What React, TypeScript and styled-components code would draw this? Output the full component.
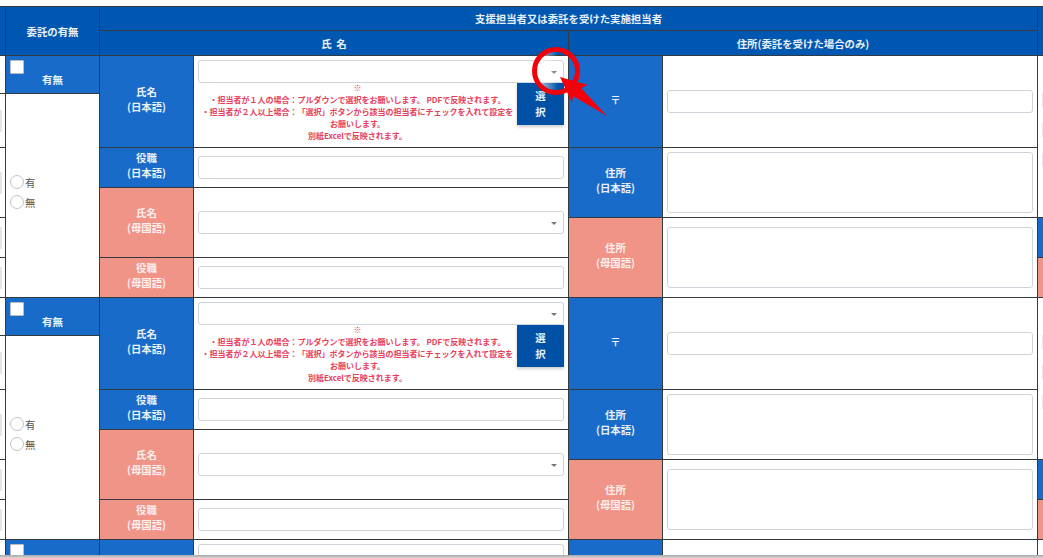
import React from 'react'
import styled, { createGlobalStyle } from 'styled-components'

const headerBlue = '#0057b1'
const labelBlue = '#186bc8'
const salmon = '#f09488'
const line = '#333a40'
const fieldBorder = '#ced4da'

const GlobalStyle = createGlobalStyle`
  html, body {
    margin: 0;
    height: 558px;
    overflow: hidden;
    background: #fff;
  }
  body {
    font-family: "Noto Sans CJK JP", "Noto Sans", sans-serif;
    font-size: 10.4px;
    color: #555;
    text-spacing-trim: space-all;
  }
`

const Page = styled.div`
  position: relative;
  width: 1043px;
  height: 558px;
  padding-top: 6px;
  box-sizing: border-box;
  overflow: hidden;
`

const Table = styled.table`
  table-layout: fixed;
  width: 1048px;
  border-collapse: separate;
  border-spacing: 0;

  td,
  th {
    padding: 0;
    border-right: 1px solid ${line};
    border-bottom: 1px solid ${line};
    box-sizing: border-box;
  }
`

const Row = styled.tr<{ $h: number }>`
  height: ${(p) => p.$h}px;
`

const HeadCell = styled.th<{ $top?: boolean }>`
  background: ${headerBlue};
  color: #e9f0f8;
  font-size: 10.4px;
  font-weight: 700;
  text-align: center;
  vertical-align: middle;
  ${(p) => p.$top && `border-top: 1px solid ${line};`}
`

const Label = styled.td<{ $tone: 'blue' | 'salmon' }>`
  background: ${(p) => (p.$tone === 'blue' ? labelBlue : salmon)};
  color: ${(p) => (p.$tone === 'blue' ? '#e9f0f8' : '#fbeeec')};
  font-weight: 700;
  line-height: 15px;
  text-align: center;
  vertical-align: middle;
  padding-bottom: 5px !important;
`

const FieldCell = styled.td`
  padding: 0 4px !important;
  vertical-align: middle;
`

const NameCell = styled.td`
  padding: 4px 4px 0 !important;
  vertical-align: top;
`

const CheckCell = styled.td`
  position: relative;
  background: ${labelBlue};
  color: #e9f0f8;
  font-weight: 700;
  vertical-align: top;
`

const CheckBox = styled.span`
  display: block;
  width: 14px;
  height: 14px;
  margin: 4px 0 0 4px;
  background: #fff;
  border: 1px solid #b8bec4;
  border-radius: 1px;
  box-sizing: border-box;
`

const CheckLabel = styled.div`
  margin-top: -2px;
  line-height: 15px;
  text-align: center;
`

const RadioCell = styled.td`
  padding: 0 0 7px 4px !important;
  vertical-align: middle;
`

const RadioRow = styled.label`
  display: flex;
  align-items: center;
  gap: 1px;
  height: 20px;
  color: #555;
`

const RadioDot = styled.span`
  width: 14px;
  height: 14px;
  border: 1px solid #bfc5cb;
  border-radius: 50%;
  box-sizing: border-box;
  background: #fff;
`

const Strip = styled.td<{ $bg?: string }>`
  background: ${(p) => p.$bg ?? '#fff'};
  vertical-align: middle;
`

const StripStub = styled.div`
  width: 2px;
  height: 22px;
  background: #e3e6ea;
`

const RightStrip = styled.td<{ $bg?: string }>`
  background: ${(p) => p.$bg ?? '#fff'};
  border-bottom: 0;
  padding: 37px 0 0 4px !important;
  vertical-align: top;
`

const RightStub = styled.div`
  width: 2px;
  height: 14px;
  margin-bottom: 16px;
  background: #e3e6ea;
`

const TextInput = styled.input`
  display: block;
  width: 100%;
  height: 23px;
  padding: 0 6px;
  background: #fff;
  border: 1px solid ${fieldBorder};
  border-radius: 3px;
  box-sizing: border-box;
`

const TextArea = styled.textarea`
  display: block;
  width: 100%;
  height: 61px;
  padding: 4px 6px;
  background: #fff;
  border: 1px solid ${fieldBorder};
  border-radius: 3px;
  box-sizing: border-box;
  resize: none;
`

const SelectBox = styled.div`
  position: relative;
  height: 23px;
  background: #fff;
  border: 1px solid ${fieldBorder};
  border-radius: 3px;
  box-sizing: border-box;

  &::after {
    content: '';
    position: absolute;
    top: 10px;
    right: 6px;
    border-top: 3px solid #777;
    border-left: 3px solid transparent;
    border-right: 3px solid transparent;
  }
`

const NoteRow = styled.div`
  display: flex;
  align-items: flex-start;
`

const Note = styled.div`
  flex: 1;
  margin-top: -1px;
  padding: 0 3px;
  color: #e8405a;
  font-size: 8px;
  font-weight: 700;
  line-height: 12px;
  text-align: center;
`

const PickButton = styled.button`
  flex: none;
  width: 47px;
  height: 42px;
  padding: 0 16px;
  background: #0050a6;
  border: 0;
  box-shadow: 0 2px 3px rgba(0, 0, 0, 0.2);
  color: #e9f0f8;
  font-family: inherit;
  font-size: 10.4px;
  font-weight: 700;
  line-height: 16px;
`

const BottomEdge = styled.div`
  position: absolute;
  left: 0;
  right: 0;
  bottom: 0;
  height: 3px;
  background: linear-gradient(#a9a9a9, #d4d4d4);
`

const Annotation = styled.svg`
  position: absolute;
  left: 520px;
  top: 40px;
  width: 100px;
  height: 90px;
`

const Section = () => (
  <>
    <Row $h={38}>
      <Strip />
      <CheckCell>
        <CheckBox />
        <CheckLabel>有無</CheckLabel>
      </CheckCell>
      <Label $tone="blue" rowSpan={2}>
        氏名
        <br />
        (日本語)
      </Label>
      <NameCell rowSpan={2}>
        <SelectBox />
        <NoteRow>
          <Note>
            ※
            <br />
            ・担当者が１人の場合：プルダウンで選択をお願いします。 PDFで反映されます。
            <br />
            ・担当者が２人以上場合：「選択」ボタンから該当の担当者にチェックを入れて設定をお願いします。
            <br />
            別紙Excelで反映されます。
          </Note>
          <PickButton type="button">選択</PickButton>
        </NoteRow>
      </NameCell>
      <Label $tone="blue" rowSpan={2}>
        〒
      </Label>
      <FieldCell rowSpan={2}>
        <TextInput />
      </FieldCell>
      <RightStrip rowSpan={4}>
        <RightStub />
        <RightStub />
        <RightStub />
      </RightStrip>
    </Row>
    <Row $h={54}>
      <Strip>
        <StripStub />
      </Strip>
      <RadioCell rowSpan={5}>
        <RadioRow>
          <RadioDot />有
        </RadioRow>
        <RadioRow>
          <RadioDot />無
        </RadioRow>
      </RadioCell>
    </Row>
    <Row $h={40}>
      <Strip rowSpan={2}>
        <StripStub />
      </Strip>
      <Label $tone="blue">
        役職
        <br />
        (日本語)
      </Label>
      <FieldCell>
        <TextInput />
      </FieldCell>
      <Label $tone="blue" rowSpan={2}>
        住所
        <br />
        (日本語)
      </Label>
      <FieldCell rowSpan={2}>
        <TextArea />
      </FieldCell>
    </Row>
    <Row $h={30}>
      <Label $tone="salmon" rowSpan={2}>
        氏名
        <br />
        (母国語)
      </Label>
      <FieldCell rowSpan={2}>
        <SelectBox />
      </FieldCell>
    </Row>
    <Row $h={40}>
      <Strip>
        <StripStub />
      </Strip>
      <Label $tone="salmon" rowSpan={2}>
        住所
        <br />
        (母国語)
      </Label>
      <FieldCell rowSpan={2}>
        <TextArea />
      </FieldCell>
      <Strip $bg={labelBlue} />
    </Row>
    <Row $h={40}>
      <Strip>
        <StripStub />
      </Strip>
      <Label $tone="salmon">
        役職
        <br />
        (母国語)
      </Label>
      <FieldCell>
        <TextInput />
      </FieldCell>
      <Strip $bg={salmon} />
    </Row>
  </>
)

export default function App() {
  return (
    <Page>
      <GlobalStyle />
      <Table>
        <colgroup>
          <col style={{ width: 6 }} />
          <col style={{ width: 94 }} />
          <col style={{ width: 94 }} />
          <col style={{ width: 375 }} />
          <col style={{ width: 94 }} />
          <col style={{ width: 375 }} />
          <col style={{ width: 10 }} />
        </colgroup>
        <thead>
          <Row $h={25}>
            <HeadCell $top rowSpan={2} />
            <HeadCell $top rowSpan={2}>
              委託の有無
            </HeadCell>
            <HeadCell $top colSpan={4}>
              支援担当者又は委託を受けた実施担当者
            </HeadCell>
            <HeadCell $top rowSpan={2} />
          </Row>
          <Row $h={25}>
            <HeadCell colSpan={2}>氏&nbsp;&nbsp;名</HeadCell>
            <HeadCell colSpan={2}>住所(委託を受けた場合のみ)</HeadCell>
          </Row>
        </thead>
        <tbody>
          <Section />
          <Section />
          <Section />
        </tbody>
      </Table>
      <Annotation viewBox="0 0 100 90">
        <defs>
          <linearGradient id="glow" x1="0" y1="0" x2="1" y2="0">
            <stop offset="0" stopColor="#fff" stopOpacity="0.85" />
            <stop offset="0.55" stopColor="#fff" stopOpacity="0" />
          </linearGradient>
        </defs>
        <circle cx="36" cy="31" r="21.5" fill="url(#glow)" stroke="#f4000a" strokeWidth="5" />
        <polygon points="40,37 68,45 61,48 87,76 53,56 52,63" fill="#f4000a" />
      </Annotation>
      <BottomEdge />
    </Page>
  )
}
